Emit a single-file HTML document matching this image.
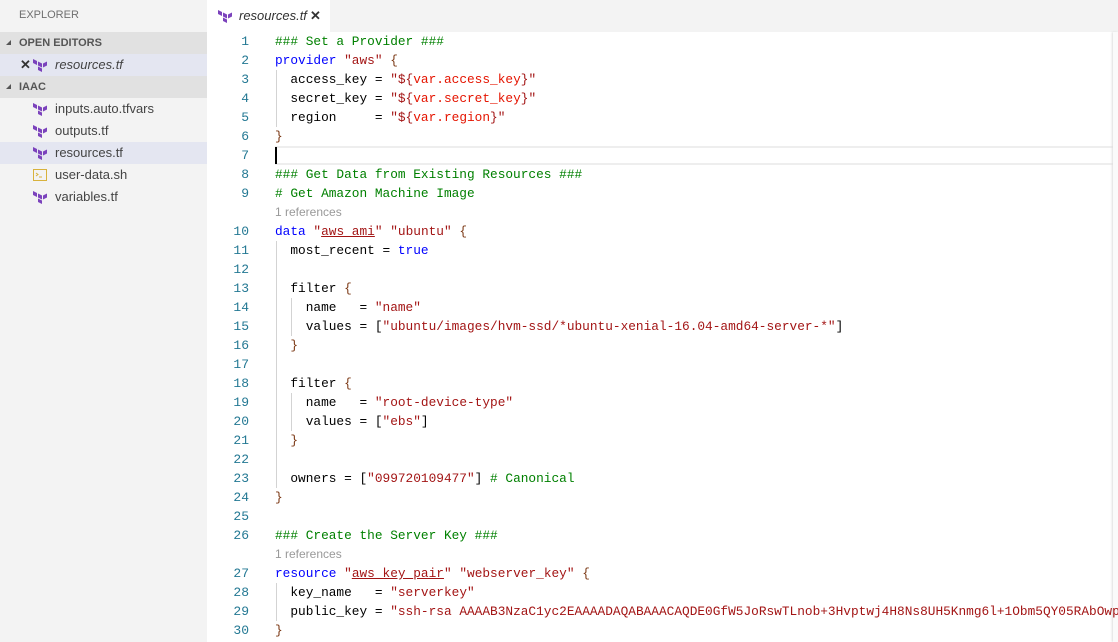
<!DOCTYPE html>
<html><head><meta charset="utf-8"><style>
*{margin:0;padding:0;box-sizing:border-box}
body{width:1118px;height:642px;overflow:hidden;background:#fff;font-family:"Liberation Sans",sans-serif;position:relative}
#side{position:absolute;left:0;top:0;width:207px;height:642px;background:#f3f3f3}
.ex{position:absolute;left:19px;top:9px;font-size:11px;color:#6f6f6f}
.hdr{position:absolute;left:0;width:207px;height:22px;background:#e1e1e1;font-size:11px;font-weight:bold;color:#555;line-height:22px;padding-left:19px}
.hdr:before{content:"";position:absolute;left:6px;top:8px;border-left:5px solid transparent;border-bottom:5px solid #555}
.row{position:absolute;left:0;width:207px;height:22px;line-height:22px;font-size:13px;color:#444;padding-left:55px}
.row svg{position:absolute;left:33px;top:4px}
.sel{background:#e4e6f1}
#tabs{position:absolute;left:207px;top:0;width:911px;height:32px;background:#f3f3f3}
#tab{position:absolute;left:0;top:0;width:123px;height:32px;background:#fff;font-size:13px;font-style:italic;color:#333;line-height:32px;padding-left:32px}
#tab svg{position:absolute;left:11px;top:9px}
#code{position:absolute;left:207px;top:32px;width:911px;height:610px;font-family:"Liberation Mono",monospace;font-size:12.8px}
.l{height:19px;line-height:19px;white-space:pre;position:relative}
.n{position:absolute;left:0;width:42px;text-align:right;color:#237893;font-size:13px}
.t{position:absolute;left:68px}
.ref{position:absolute;left:68px;font-family:"Liberation Sans",sans-serif;font-size:12px;color:#999}
.c{color:#008000}.k{color:#0000ff}.s{color:#a31515}.v{color:#e51400}.p{color:#7b3814}
.u{text-decoration:underline;text-decoration-color:#a31515}
.g{position:absolute;width:1px;background:#d3d3d3}
</style></head><body>
<div id="side">
<div class="ex">EXPLORER</div>
<div class="hdr" style="top:32px">OPEN EDITORS</div>
<div class="row sel" style="top:54px;font-style:italic"><span style="position:absolute;left:20px;font-style:normal;font-weight:bold;color:#333">✕</span><svg width="14" height="14" viewBox="0 0 14 14"><path d="M0 1l4 2v4L0 5z M5 3.5l4 2v4l-4-2z M5 8.5l4 2v3.5l-4-2z M10 5.5l4-2v4l-4 2z" fill="#7b42bc"/></svg>resources.tf</div>
<div class="hdr" style="top:76px">IAAC</div>
<div class="row" style="top:98px"><svg width="14" height="14" viewBox="0 0 14 14"><path d="M0 1l4 2v4L0 5z M5 3.5l4 2v4l-4-2z M5 8.5l4 2v3.5l-4-2z M10 5.5l4-2v4l-4 2z" fill="#7b42bc"/></svg>inputs.auto.tfvars</div>
<div class="row" style="top:120px"><svg width="14" height="14" viewBox="0 0 14 14"><path d="M0 1l4 2v4L0 5z M5 3.5l4 2v4l-4-2z M5 8.5l4 2v3.5l-4-2z M10 5.5l4-2v4l-4 2z" fill="#7b42bc"/></svg>outputs.tf</div>
<div class="row sel" style="top:142px"><svg width="14" height="14" viewBox="0 0 14 14"><path d="M0 1l4 2v4L0 5z M5 3.5l4 2v4l-4-2z M5 8.5l4 2v3.5l-4-2z M10 5.5l4-2v4l-4 2z" fill="#7b42bc"/></svg>resources.tf</div>
<div class="row" style="top:164px"><svg width="14" height="14" viewBox="0 0 14 14"><rect x="0.5" y="1.5" width="13" height="11" fill="none" stroke="#d8b23c"/><path d="M3 5l2 1.5L3 8M6 9h3" stroke="#d8b23c" fill="none"/></svg>user-data.sh</div>
<div class="row" style="top:186px"><svg width="14" height="14" viewBox="0 0 14 14"><path d="M0 1l4 2v4L0 5z M5 3.5l4 2v4l-4-2z M5 8.5l4 2v3.5l-4-2z M10 5.5l4-2v4l-4 2z" fill="#7b42bc"/></svg>variables.tf</div>
</div>
<div id="tabs"><div id="tab"><svg width="14" height="14" viewBox="0 0 14 14"><path d="M0 1l4 2v4L0 5z M5 3.5l4 2v4l-4-2z M5 8.5l4 2v3.5l-4-2z M10 5.5l4-2v4l-4 2z" fill="#7b42bc"/></svg>resources.tf<span style="position:absolute;left:103px;font-style:normal;font-weight:bold">✕</span></div></div>
<div id="code">
<div style="position:absolute;left:68px;top:114px;width:838px;height:19px;border-top:2px solid #eee;border-bottom:2px solid #eee"></div>
<div style="position:absolute;left:68px;top:115px;width:2px;height:17px;background:#000"></div>
<div style="position:absolute;left:906px;top:0;width:5px;height:610px;background:#fafafa;box-shadow:-1px 0 2px #ddd"></div>
<div class="g" style="left:69px;top:38px;height:57px"></div>
<div class="g" style="left:69px;top:209px;height:247px"></div>
<div class="g" style="left:84px;top:266px;height:38px"></div>
<div class="g" style="left:84px;top:361px;height:38px"></div>
<div class="g" style="left:69px;top:551px;height:38px"></div>
<div class="l"><span class="n">1</span><span class="t c">### Set a Provider ###</span></div>
<div class="l"><span class="n">2</span><span class="t"><span class="k">provider</span> <span class="s">"aws"</span> <span class="p">{</span></span></div>
<div class="l"><span class="n">3</span><span class="t">  access_key = <span class="s">"${</span><span class="v">var.access_key</span><span class="s">}"</span></span></div>
<div class="l"><span class="n">4</span><span class="t">  secret_key = <span class="s">"${</span><span class="v">var.secret_key</span><span class="s">}"</span></span></div>
<div class="l"><span class="n">5</span><span class="t">  region     = <span class="s">"${</span><span class="v">var.region</span><span class="s">}"</span></span></div>
<div class="l"><span class="n">6</span><span class="t p">}</span></div>
<div class="l"><span class="n">7</span><span class="t"></span></div>
<div class="l"><span class="n">8</span><span class="t c">### Get Data from Existing Resources ###</span></div>
<div class="l"><span class="n">9</span><span class="t c"># Get Amazon Machine Image</span></div>
<div class="l"><span class="ref">1 references</span></div>
<div class="l"><span class="n">10</span><span class="t"><span class="k">data</span> <span class="s">"<span class="u">aws_ami</span>"</span> <span class="s">"ubuntu"</span> <span class="p">{</span></span></div>
<div class="l"><span class="n">11</span><span class="t">  most_recent = <span class="k">true</span></span></div>
<div class="l"><span class="n">12</span><span class="t"></span></div>
<div class="l"><span class="n">13</span><span class="t">  filter <span class="p">{</span></span></div>
<div class="l"><span class="n">14</span><span class="t">    name   = <span class="s">"name"</span></span></div>
<div class="l"><span class="n">15</span><span class="t">    values = [<span class="s">"ubuntu/images/hvm-ssd/*ubuntu-xenial-16.04-amd64-server-*"</span>]</span></div>
<div class="l"><span class="n">16</span><span class="t p">  }</span></div>
<div class="l"><span class="n">17</span><span class="t"></span></div>
<div class="l"><span class="n">18</span><span class="t">  filter <span class="p">{</span></span></div>
<div class="l"><span class="n">19</span><span class="t">    name   = <span class="s">"root-device-type"</span></span></div>
<div class="l"><span class="n">20</span><span class="t">    values = [<span class="s">"ebs"</span>]</span></div>
<div class="l"><span class="n">21</span><span class="t p">  }</span></div>
<div class="l"><span class="n">22</span><span class="t"></span></div>
<div class="l"><span class="n">23</span><span class="t">  owners = [<span class="s">"099720109477"</span>] <span class="c"># Canonical</span></span></div>
<div class="l"><span class="n">24</span><span class="t p">}</span></div>
<div class="l"><span class="n">25</span><span class="t"></span></div>
<div class="l"><span class="n">26</span><span class="t c">### Create the Server Key ###</span></div>
<div class="l"><span class="ref">1 references</span></div>
<div class="l"><span class="n">27</span><span class="t"><span class="k">resource</span> <span class="s">"<span class="u">aws_key_pair</span>"</span> <span class="s">"webserver_key"</span> <span class="p">{</span></span></div>
<div class="l"><span class="n">28</span><span class="t">  key_name   = <span class="s">"serverkey"</span></span></div>
<div class="l"><span class="n">29</span><span class="t">  public_key = <span class="s">"ssh-rsa AAAAB3NzaC1yc2EAAAADAQABAAACAQDE0GfW5JoRswTLnob+3Hvptwj4H8Ns8UH5Knmg6l+1Obm5QY05RAbOwp</span></span></div>
<div class="l"><span class="n">30</span><span class="t p">}</span></div>
</div>
</body></html>
